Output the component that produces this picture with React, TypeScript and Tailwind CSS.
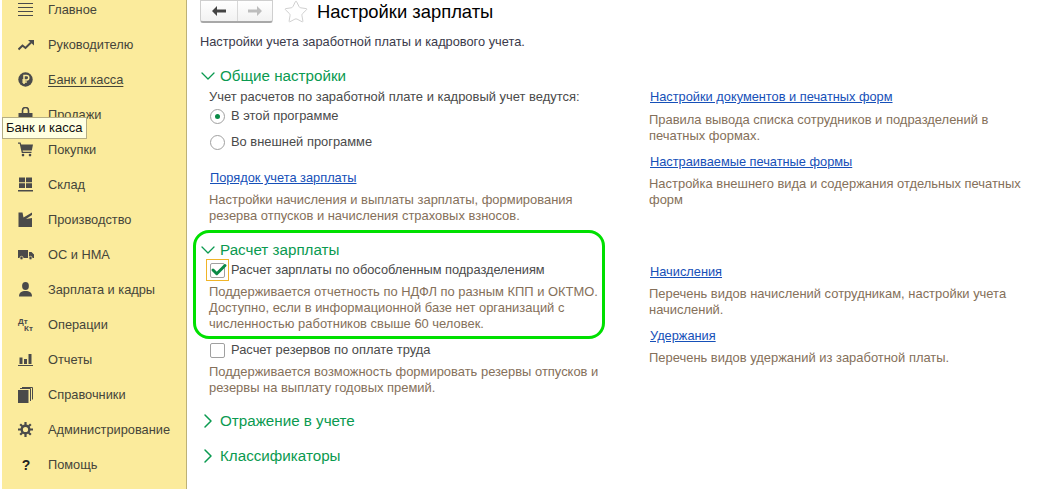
import React from 'react';
import { ChevronDown, ChevronRight, Check, Star } from 'lucide-react';

const iconCls = 'w-[15px] h-[15px] text-[#4a4a4a]';

const MenuIcon = ({ name }: { name: string }) => {
  switch (name) {
    case 'main':
      return (
        <svg viewBox="0 0 15 15" className={iconCls} fill="none" stroke="currentColor" strokeWidth="1">
          <path d="M0 1.500h15M0 5.500h15M0 9.500h15M0 13.500h15" />
        </svg>
      );
    case 'chief':
      return (
        <svg viewBox="0 0 16 12" className="w-[16px] h-[12px] text-[#4a4a4a]" fill="none" stroke="currentColor" strokeWidth="2">
          <path d="M0.500 10.500l4-4 3 2.500 5.500-5.500" />
          <path d="M10 1h6v5.500z" fill="currentColor" stroke="none" />
        </svg>
      );
    case 'bank':
      return (
        <svg viewBox="0 0 15 15" className={iconCls}>
          <circle cx="7.500" cy="7.500" r="7.200" fill="currentColor" />
          <path d="M6 12V3.500h2.600a2.200 2.200 0 010 4.400H4.300M4.300 10h4.500" fill="none" stroke="#fbeb9c" strokeWidth="1.500" />
        </svg>
      );
    case 'sales':
      return (
        <svg viewBox="0 0 15 15" className={iconCls} fill="currentColor">
          <path d="M0.500 6h14v9H0.500z" />
          <path d="M4.500 7V3.500a3 3 0 016 0V7" fill="none" stroke="currentColor" strokeWidth="1.600" />
        </svg>
      );
    case 'buy':
      return (
        <svg viewBox="0 0 15 14" className={iconCls} fill="currentColor">
          <path d="M0 0h2.600l.6 2H15l-1.200 6H4.600l.3 1.200h8.600v1.200H3.800L1.700 1.200H0z" />
          <circle cx="5" cy="12.600" r="1.300" />
          <circle cx="12" cy="12.600" r="1.300" />
        </svg>
      );
    case 'stock':
      return (
        <svg viewBox="0 0 15 14" className={iconCls} fill="currentColor">
          <path d="M1 0h6v4.700H1zM8 0h6v4.700H8zM1 5.700h6v4.800H1zM8 5.700h6v4.800H8zM0 12.500h15V14H0z" />
        </svg>
      );
    case 'factory':
      return (
        <svg viewBox="0 0 15 15" className={iconCls} fill="currentColor">
          <path d="M0.500 0.500h4l1 5 8.500-5v5l-.001 9.500H0.500z" />
          <path d="M8 7l6-4v3z" fill="#fbeb9c" />
        </svg>
      );
    case 'truck':
      return (
        <svg viewBox="0 0 16 10" className="w-[16px] h-[10px] text-[#4a4a4a]" fill="currentColor">
          <path d="M0 0h10v8H0zM11 2h2.500L16 4.500V8h-5z" />
          <circle cx="3.500" cy="8" r="1.700" stroke="#fbeb9c" strokeWidth="0.700" />
          <circle cx="12.500" cy="8" r="1.700" stroke="#fbeb9c" strokeWidth="0.700" />
        </svg>
      );
    case 'person':
      return (
        <svg viewBox="0 0 15 15" className={iconCls} fill="currentColor">
          <ellipse cx="7.500" cy="4" rx="3.400" ry="4" />
          <path d="M1 14.500c0-4 2.500-5.500 6.500-5.500s6.500 1.500 6.500 5.500z" />
        </svg>
      );
    case 'report':
      return (
        <svg viewBox="0 0 15 12" className="w-[15px] h-[12px] text-[#4a4a4a]" fill="currentColor">
          <path d="M1.500 3.500h3V10h-3zM6 5h3v5H6zM10.500 0h3v10h-3zM0 11h15v1H0z" />
        </svg>
      );
    case 'books':
      return (
        <svg viewBox="0 0 15 16" className="w-[15px] h-[16px] text-[#4a4a4a]">
          <path d="M0 3h10.500v13H0z" fill="currentColor" />
          <path d="M2 1.500h10.500v12.500M4 0.500h10.500v12" fill="none" stroke="currentColor" strokeWidth="1" />
        </svg>
      );
    case 'gear':
      return (
        <svg viewBox="0 0 15 15" className={iconCls} fill="none" stroke="currentColor">
          <circle cx="7.500" cy="7.500" r="3.800" strokeWidth="2.400" />
          <path d="M7.500 0v3M7.500 12v3M0 7.500h3M12 7.500h3M2.200 2.200l2.100 2.100M10.700 10.700l2.100 2.100M12.800 2.200l-2.100 2.100M4.300 10.700l-2.100 2.100" strokeWidth="2.200" />
        </svg>
      );
    default:
      return null;
  }
};

const menu = [
  { id: 'main', label: 'Главное' },
  { id: 'chief', label: 'Руководителю' },
  { id: 'bank', label: 'Банк и касса', active: true },
  { id: 'sales', label: 'Продажи' },
  { id: 'buy', label: 'Покупки' },
  { id: 'stock', label: 'Склад' },
  { id: 'factory', label: 'Производство' },
  { id: 'truck', label: 'ОС и НМА' },
  { id: 'person', label: 'Зарплата и кадры' },
  { id: 'ops', label: 'Операции' },
  { id: 'report', label: 'Отчеты' },
  { id: 'books', label: 'Справочники' },
  { id: 'gear', label: 'Администрирование' },
  { id: 'help', label: 'Помощь' },
];

const Sidebar = () => (
  <aside className="relative w-[185px] shrink-0 ml-[2px] h-full bg-[#fbeb9c] border-r border-[#bdb176]">
    <div className="-mt-[8px]">
      {menu.map((m) => (
        <div key={m.id} className="h-[35px] flex items-center pl-[16px] text-[#45453a]">
          <div className="w-[30px] flex items-center justify-start">
            {m.id === 'ops' ? (
              <span className="w-[16px] flex flex-col text-[8px] leading-[7px] font-bold text-[#4a4a4a]">
                <span>Дт</span>
                <span className="pl-[6px]">Кт</span>
              </span>
            ) : m.id === 'help' ? (
              <span className="w-[16px] text-center text-[14px] font-bold text-[#222]">?</span>
            ) : (
              <MenuIcon name={m.id} />
            )}
          </div>
          <span className={m.active ? 'underline underline-offset-2' : ''}>{m.label}</span>
        </div>
      ))}
    </div>
    <div className="absolute left-[0px] top-[117px] h-[22px] px-[3px] flex items-center bg-[#ffffe1] border border-[#b5ad82] text-[13px] text-[#111]">
      Банк и касса
    </div>
  </aside>
);

const Section = ({ title, open = true }: { title: string; open?: boolean }) => (
  <div className="flex items-center h-[22px] text-[#0a9a50] text-[15.2px]">
    {open ? (
      <ChevronDown className="w-[24px] h-[24px] -ml-[4px]" strokeWidth={1.300} />
    ) : (
      <ChevronRight className="w-[24px] h-[24px] -ml-[4px]" strokeWidth={1.500} />
    )}
    {title}
  </div>
);

const Radio = ({ label, on }: { label: string; on?: boolean }) => (
  <div className="flex items-center h-[26px] pl-[1px] text-[12.9px] text-[#4a4a4a]">
    <span className="w-[15px] h-[15px] rounded-full border border-[#a0a0a0] bg-white flex items-center justify-center mr-[6px]">
      {on && <span className="w-[5px] h-[5px] rounded-full bg-[#0a8a46]" />}
    </span>
    {label}
  </div>
);

const Note = ({ children }: { children: React.ReactNode }) => (
  <p className="text-[12.94px] text-[#85705a]">{children}</p>
);

const Link = ({ children }: { children: React.ReactNode }) => (
  <a className="block text-[#1650b8] underline">{children}</a>
);

export default function App() {
  return (
    <div className="w-[1057px] h-[489px] overflow-hidden flex bg-white text-[12.8px] leading-[16px] font-['Liberation_Sans',Arial,sans-serif]">
      <Sidebar />
      <main className="flex-1 pl-[13px]">
        <div className="flex items-center h-[23px]">
          <div className="flex w-[73px] h-[23px] rounded-b-[3px] border border-[#cfcfcf] border-b-2 border-b-[#a8a8a8] bg-gradient-to-b from-white to-[#f2f2f2]">
            <div className="w-[37px] flex items-center justify-center border-r border-[#d8d8d8]">
              <svg viewBox="0 0 14 10" className="w-[14px] h-[10px] text-[#444]" fill="currentColor">
                <path d="M0 5l5-5v3.500h9v3H5V10z" />
              </svg>
            </div>
            <div className="flex-1 flex items-center justify-center">
              <svg viewBox="0 0 14 10" className="w-[14px] h-[10px] text-[#bdbdbd]" fill="currentColor">
                <path d="M14 5L9 0v3.500H0v3h9V10z" />
              </svg>
            </div>
          </div>
          <Star className="w-[26px] h-[26px] ml-[10px] text-[#c8c8c8]" strokeWidth={0.800} />
          <h1 className="ml-[8px] text-[18.4px] text-black">Настройки зарплаты</h1>
        </div>
        <p className="mt-[11px] text-[#3a3a4a]">Настройки учета заработной платы и кадрового учета.</p>
        <div className="flex mt-[15px]">
          <div className="w-[450px] shrink-0">
            <Section title="Общие настройки" />
            <div className="pl-[9px]">
              <p className="mt-[3px] leading-[14px] text-[12.94px] text-[#4a4a4a]">Учет расчетов по заработной плате и кадровый учет ведутся:</p>
              <div className="-mt-[1px]">
                <Radio label="В этой программе" on />
                <Radio label="Во внешней программе" />
              </div>
              <div className="mt-[15px] pl-[1px]"><Link>Порядок учета зарплаты</Link></div>
              <div className="mt-[6px] w-[395px]">
                <Note>Настройки начисления и выплаты зарплаты, формирования резерва отпусков и начисления страховых взносов.</Note>
              </div>
            </div>
            <div className="relative mt-[15px]">
              <div className="absolute -left-[7px] -top-[9px] w-[412px] h-[109px] rounded-[16px] border-[3px] border-[#00e000]" />
              <Section title="Расчет зарплаты" />
              <div className="pl-[9px]">
                <div className="flex items-center h-[22px] -mt-[2px] text-[#4a4a4a]">
                  <span className="w-[23px] h-[22px] border border-[#f0b429] flex items-center justify-center -ml-[3px] mr-[2px]">
                    <span className="relative w-[15px] h-[15px] border border-[#a0a0a0] rounded-[2px] bg-white">
                      <Check className="absolute -top-[3px] -left-[1px] w-[18px] h-[18px] text-[#0a8a46]" strokeWidth={4} />
                    </span>
                  </span>
                  Расчет зарплаты по обособленным подразделениям
                </div>
                <div className="mt-[3px] w-[395px]">
                  <Note>Поддерживается отчетность по НДФЛ по разным КПП и ОКТМО. Доступно, если в информационной базе нет организаций с численностью работников свыше 60 человек.</Note>
                </div>
                <div className="flex items-center h-[22px] mt-[7px] pl-[1px] text-[12.9px] text-[#4a4a4a]">
                  <span className="w-[15px] h-[15px] border border-[#a0a0a0] bg-white rounded-[2px] mr-[6px]" />
                  Расчет резервов по оплате труда
                </div>
                <div className="mt-[3px] w-[395px]">
                  <Note>Поддерживается возможность формировать резервы отпусков и резервы на выплату годовых премий.</Note>
                </div>
              </div>
            </div>
            <div className="mt-[14px]"><Section title="Отражение в учете" open={false} /></div>
            <div className="mt-[13px]"><Section title="Классификаторы" open={false} /></div>
          </div>
          <div className="w-[385px] pt-[24px]">
            <Link>Настройки документов и печатных форм</Link>
            <div className="mt-[7px] -ml-[1px]"><Note>Правила вывода списка сотрудников и подразделений в печатных формах.</Note></div>
            <div className="mt-[10px]"><Link>Настраиваемые печатные формы</Link></div>
            <div className="mt-[6px] -ml-[1px]"><Note>Настройка внешнего вида и содержания отдельных печатных форм</Note></div>
            <div className="mt-[56px]"><Link>Начисления</Link></div>
            <div className="mt-[6px] -ml-[1px]"><Note>Перечень видов начислений сотрудникам, настройки учета начислений.</Note></div>
            <div className="mt-[10px]"><Link>Удержания</Link></div>
            <div className="mt-[6px] -ml-[1px]"><Note>Перечень видов удержаний из заработной платы.</Note></div>
          </div>
        </div>
      </main>
    </div>
  );
}
